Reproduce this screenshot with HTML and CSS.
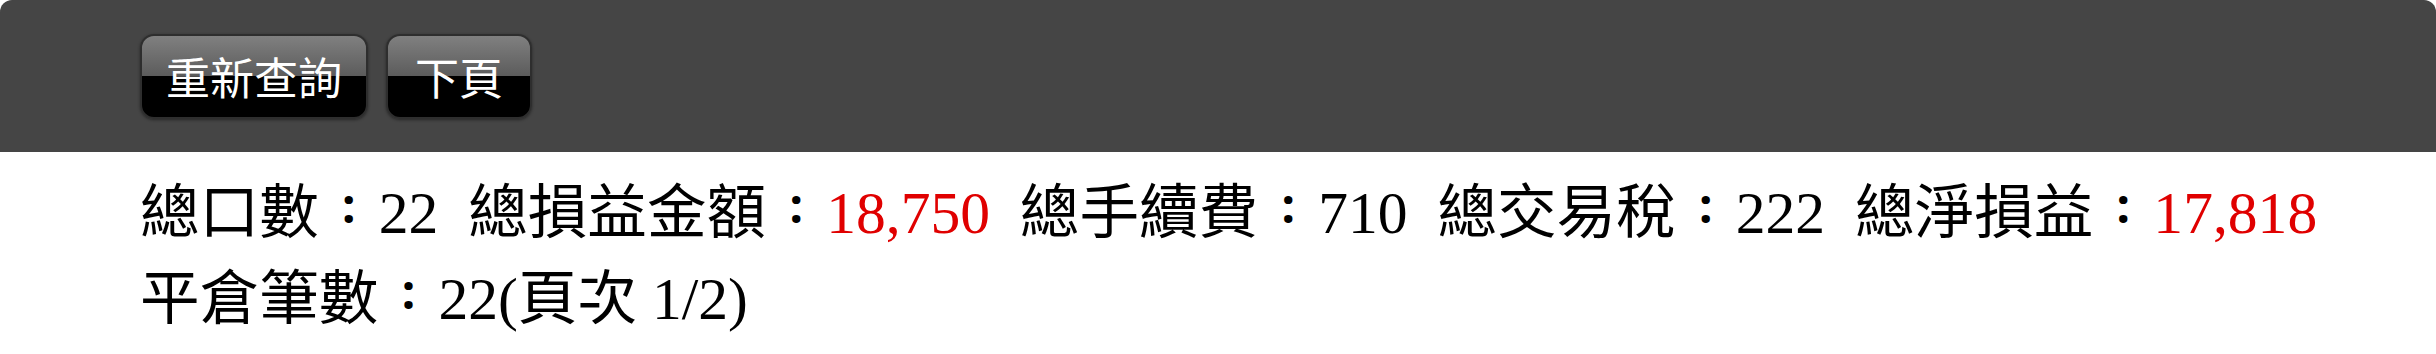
FILE: index.html
```html
<!DOCTYPE html>
<html lang="zh-Hant">
<head>
	<meta charset="UTF-8">
	<title>平倉損益</title>
	<link rel="stylesheet" href="styles.css">
</head>
<body>
	<div class="toolbar">
		<button class="btn" type="button">重新查詢</button>
		<button class="btn" type="button">下頁</button>
	</div>
	<div class="summary">
		<div class="line">總口數<span class="colon">:</span>22&nbsp;&nbsp;總損益金額<span class="colon">:</span><span class="red">18,750</span>&nbsp;&nbsp;總手續費<span class="colon">:</span>710&nbsp;&nbsp;總交易稅<span class="colon">:</span>222&nbsp;&nbsp;總淨損益<span class="colon">:</span><span class="red">17,818</span></div>
		<div class="line">平倉筆數<span class="colon">:</span>22(頁次 1/2)</div>
	</div>
</body>
</html>
```

FILE: styles.css
```css
html,body{
	padding: 0;
	margin: 0;
	background: #fff;
}
.toolbar {
	display: flex;
	align-items: center;
	gap: 18px;
	height: 152px;
	padding-left: 140px;
	background: #454545;
	border-radius: 12px 12px 0 0;
}
.btn {
	min-width: 146px;
	height: 85px;
	padding: 0 24px;
	border: 2px solid #2e2e2e;
	border-radius: 14px;
	background: linear-gradient(to bottom, #808080 0%, #5c5c5c 49%, #000 50%, #000 100%);
	box-shadow: 0 1px 3px rgba(0,0,0,.45);
	color: #fff;
	font: 44px "Noto Sans CJK TC", "Noto Sans", sans-serif;
	line-height: 1;
}
.summary {
	padding: 18px 0 0 140px;
	font: 59.6px/86px "Liberation Serif", "Noto Sans CJK TC", serif;
	color: #000;
}
.line {
	white-space: nowrap;
}
/* 全形冒號置中 */
.colon {
	display: inline-block;
	width: 60px;
	text-align: center;
	font: bold 48px "Noto Sans", sans-serif;
	vertical-align: 0.2em;
}
.red {
	color: #e00000;
}
```
